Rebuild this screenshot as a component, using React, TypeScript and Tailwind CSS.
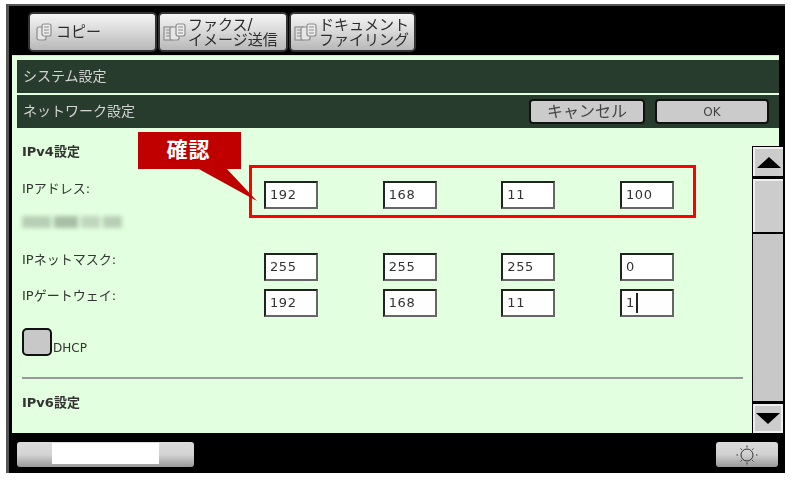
import React from "react";

const font = { fontFamily: '"DejaVu Sans","Noto Sans CJK JP",sans-serif' };

function DocIcon({ wide }: { wide?: boolean }) {
  return (
    <svg width={wide ? 24 : 17} height="20" viewBox={wide ? "0 0 24 20" : "0 0 17 20"} fill="none" stroke="#8c8c8c" strokeWidth="1.2" className="shrink-0">
      {wide && <rect x="1" y="5" width="8" height="13" fill="#e0e0e0" />}
      {wide && <path d="M3 8h4M3 11h4M3 14h4" />}
      <rect x={wide ? 7 : 1} y="5" width="9" height="13" rx="2" fill="#e6e6e6" />
      <rect x={wide ? 13 : 6} y="2" width="9" height="12" rx="2" fill="#ececec" />
      <path d={wide ? "M15 5h5M15 8h5M15 11h5" : "M8 5h5M8 8h5M8 11h5"} />
    </svg>
  );
}

function Tab({ w, children, icon, pad }: { w: string; children: React.ReactNode; icon: React.ReactNode; pad: string }) {
  return (
    <div className={`${w} ${pad} h-[40px] rounded-[5px] border-2 border-[#333] flex items-center gap-[1px] text-[#2c2c2c] text-[15px] leading-[15px] bg-gradient-to-b from-[#f4f4f4] via-[#d8d8d8] to-[#b8b8b8]`}>
      {icon}
      <div className="whitespace-nowrap pt-[1px]">{children}</div>
    </div>
  );
}

function Field({ v, cursor }: { v: string; cursor?: boolean }) {
  return (
    <div className="w-[54px] h-[28px] bg-white border-2 border-t-[#222] border-l-[#222] border-r-[#666] border-b-[#666] flex items-center pl-[4px] text-[13px] tracking-[0.6px] text-[#333]">
      {v}
      {cursor && <span className="inline-block w-[2px] h-[20px] bg-[#222] ml-[1px]" />}
    </div>
  );
}

function FieldRow({ label, vals, cursor, className, labelClass }: { label: string; vals: string[]; cursor?: boolean; className: string; labelClass?: string }) {
  return (
    <div className={`flex items-start ${className}`}>
      <div className={`w-[242px] text-[13px] leading-[18px] text-[#333] whitespace-nowrap ${labelClass ?? ""}`}>{label}</div>
      <div className="w-[410px] flex justify-between pt-[2px]">
        {vals.map((v, i) => (
          <Field key={i} v={v} cursor={cursor && i === 3} />
        ))}
      </div>
    </div>
  );
}

function Bar({ title, children }: { title: string; children?: React.ReactNode }) {
  return (
    <div className="h-[33px] bg-[#283c2e] flex items-center justify-between pl-[6px] pr-[10px] text-[#d4d4d4] text-[14px]">
      <span>{title}</span>
      {children}
    </div>
  );
}

function BarButton({ w, children }: { w: string; children: React.ReactNode }) {
  return (
    <div className={`${w} h-[25px] rounded-[4px] border-2 border-[#111] bg-[#cbcbcb] flex items-center justify-center text-[#444]`}>
      {children}
    </div>
  );
}

export default function App() {
  return (
    <div className="w-[793px] h-[480px] bg-white pl-[6px] pt-[4px] overflow-hidden" style={font}>
      <div className="relative w-[779px] h-[469px] bg-black border-l-[3px] border-t-[2px] border-[#555] blur-[0.35px]">
        <div className="flex gap-[1px] pl-[19px] pt-[6px] h-[49px]">
          <Tab w="w-[129px]" pad="pl-[6px]" icon={<DocIcon />}>
            <span className="ml-[2px]">コピー</span>
          </Tab>
          <Tab w="w-[130px]" pad="pl-[3px]" icon={<DocIcon wide />}>
            ファクス/
            <br />
            イメージ送信
          </Tab>
          <Tab w="w-[127px]" pad="pl-[3px]" icon={<DocIcon wide />}>
            ドキュメント
            <br />
            ファイリング
          </Tab>
        </div>

        <div className="ml-[3px] w-[767px] h-[378px] bg-[#e2ffdf] border-t border-[#cfe8cc] pt-[4px] pl-[5px]">
          <div className="flex flex-col gap-[2px]">
            <Bar title="システム設定" />
            <Bar title="ネットワーク設定">
              <div className="flex gap-[10px]">
                <BarButton w="w-[116px]">
                  <span className="text-[16px]">キャンセル</span>
                </BarButton>
                <BarButton w="w-[114px]">
                  <span className="text-[12px]">OK</span>
                </BarButton>
              </div>
            </Bar>
          </div>

          <div className="pl-[5px] pt-[15px]">
            <div className="text-[13px] font-bold leading-[18px] text-[#333]">IPv4設定</div>
            <FieldRow className="mt-[18px]" labelClass="pt-[1px]" label="IPアドレス:" vals={["192", "168", "11", "100"]} />
            <div className="mt-[6px] w-[100px] h-[14px] flex gap-[3px] blur-[2px] opacity-50">
              <div className="w-[30px] h-[12px] mt-[1px] bg-[#8f9f8f]" />
              <div className="w-[25px] h-[12px] mt-[1px] bg-[#6f7f6f]" />
              <div className="w-[20px] h-[12px] mt-[1px] bg-[#9fae9f]" />
              <div className="w-[20px] h-[12px] mt-[1px] bg-[#8f9f8f]" />
            </div>
            <FieldRow className="mt-[22px]" label="IPネットマスク:" vals={["255", "255", "255", "0"]} />
            <FieldRow className="mt-[6px]" label="IPゲートウェイ:" vals={["192", "168", "11", "1"]} cursor />
            <div className="mt-[11px] flex items-end">
              <div className="w-[30px] h-[28px] rounded-[5px] border-2 border-[#111] bg-[#c8c8c8]" />
              <span className="text-[12px] leading-[15px] text-[#333] ml-[1px]">DHCP</span>
            </div>
            <div className="mt-[21px] w-[721px] h-[2px] bg-[#999]" />
            <div className="mt-[15px] text-[13px] font-bold leading-[18px] text-[#333]">IPv6設定</div>
          </div>
        </div>

        <div className="flex items-center justify-between pl-[8px] pr-[7px] pt-[9px]">
          <div className="w-[177px] h-[25px] rounded-[3px] bg-gradient-to-b from-[#dcdcdc] via-[#d4d4d4] to-[#999] flex justify-center">
            <div className="w-[107px] h-[21px] bg-white mt-[1px]" />
          </div>
          <div className="w-[62px] h-[25px] rounded-[3px] bg-gradient-to-b from-[#dcdcdc] via-[#d0d0d0] to-[#999] flex items-center justify-center">
            <svg width="22" height="22" viewBox="0 0 22 22" fill="none" stroke="#333" strokeWidth="1">
              <circle cx="11" cy="11" r="6" />
              <path d="M11 1.5v2M11 18.5v2M2 11h-1.5M21.5 11H20M4.5 4.5l1.3 1.3M17.5 4.5l-1.3 1.3M4.5 17.5l1.3-1.3M17.5 17.5l-1.3-1.3" />
            </svg>
          </div>
        </div>

        {/* scrollbar */}
        <div className="absolute left-[743px] top-[140px] w-[32px] h-[288px] bg-black flex flex-col gap-[3px] p-[1px]">
          <div className="h-[29px] bg-[#ccc] border-t-2 border-l-2 border-[#eee] flex items-center justify-center">
            <div className="w-0 h-0 border-l-[12px] border-r-[12px] border-b-[11px] border-l-transparent border-r-transparent border-b-black" />
          </div>
          <div className="h-[53px] bg-[#ccc] border-t-2 border-l-2 border-[#eee]" />
          <div className="flex-1 -mt-[1px] bg-[#c8c8c8]" />
          <div className="h-[29px] bg-[#ccc] border-2 border-[#eee] flex items-center justify-center">
            <div className="w-0 h-0 border-l-[12px] border-r-[12px] border-t-[11px] border-l-transparent border-r-transparent border-t-black" />
          </div>
        </div>
      </div>

      {/* annotation */}
      <div className="absolute left-[249px] top-[165px] w-[447px] h-[53px] border-[3px] border-[#f00]" />
      <div className="absolute left-[138px] top-[132px] w-[103px] h-[37px] bg-[#c00000] text-white text-[21px] font-bold flex items-center justify-center pr-[2px] tracking-[1px]">
        確認
      </div>
      <svg className="absolute left-[195px] top-[168px]" width="65" height="36" viewBox="0 0 65 36">
        <path d="M2 0L62 33L31 0Z" fill="#c00000" />
      </svg>
    </div>
  );
}
